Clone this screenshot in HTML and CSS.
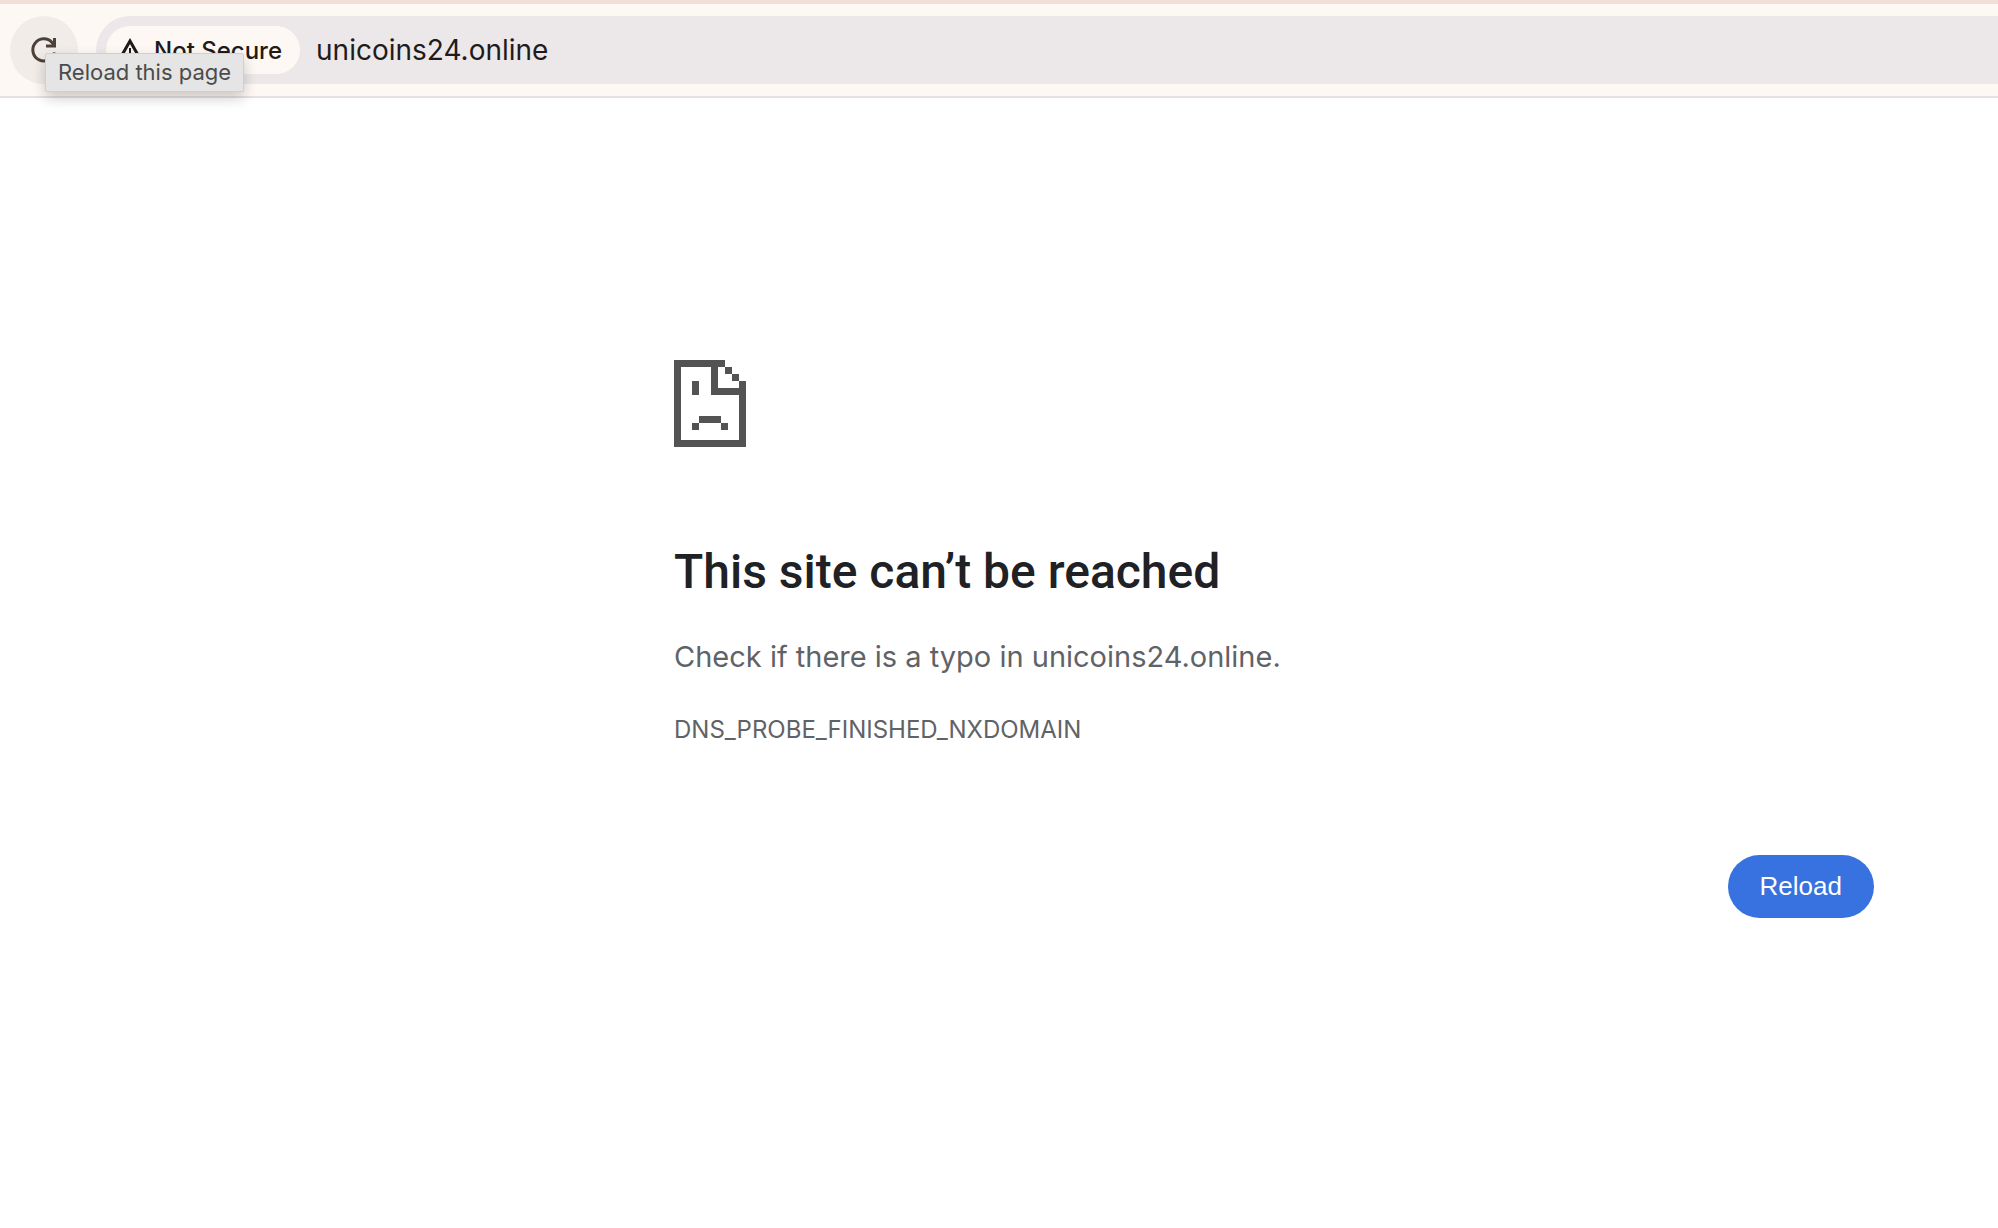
FILE: index.html
```html
<!DOCTYPE html>
<html lang="en">
<head>
  <meta charset="UTF-8">
  <meta name="viewport" content="width=device-width, initial-scale=1.0">
  <title>unicoins24.online</title>
  <link rel="stylesheet" href="styles.css">
</head>
<body>
  <header class="toolbar">
    <div class="reload-wrap">
      <button class="reload-icon" type="button" aria-label="Reload" aria-describedby="tip">
        <svg width="28" height="28" viewBox="0 0 28 28" fill="none" stroke="currentColor" stroke-width="3">
          <path d="M24.5 16.5A11 11 0 1 1 22 6.500L24.500 9.500"/>
          <path d="M24.500 2v8H16"/>
        </svg>
      </button>
      <div class="tooltip" id="tip" role="tooltip">Reload this page</div>
    </div>
    <div class="omnibox">
      <button class="chip" type="button">
        <svg width="24" height="24" viewBox="0 0 24 24" fill="none" stroke="currentColor" stroke-width="3">
          <path d="M12 3L22.500 21.500H1.500Z"/>
          <path d="M12 10v5M12 17v2.500" stroke-width="2"/>
        </svg>
        Not Secure
      </button>
      <input class="url" type="text" value="unicoins24.online" aria-label="Address">
    </div>
  </header>

  <main class="error">
    <!-- Sad page -->
    <svg class="sad-page" width="72" height="87" viewBox="0 0 72 87" fill="currentColor" shape-rendering="crispEdges" aria-hidden="true">
      <path d="M0 0h51v7H44v21h21V21h7v66H0zM7 7v73h58V35H37V7z" fill-rule="evenodd"/>
      <path d="M51 7h7v7h-7zM58 14h7v7h-7z"/>
      <path d="M18 21h7v14h-7z"/>
      <path d="M25 56h22v7H25zM18 63h7v7h-7zM47 63h7v7h-7z"/>
    </svg>
    <h1>This site can’t be reached</h1>
    <p class="summary">Check if there is a typo in unicoins24.online.</p>
    <p class="code">DNS_PROBE_FINISHED_NXDOMAIN</p>
    <div class="actions">
      <button class="reload-button" type="button">Reload</button>
    </div>
  </main>
</body>
</html>
```
FILE: styles.css
```css
:root {
  --toolbar: #fef8f4;
  --field: #ece8e9;
  --text: #202124;
  --muted: #5f6368;
  --primary: #3871e0;
}
* {
  box-sizing: border-box;
}
body {
  margin: 0;
  background: #fff;
  color: var(--text);
  font-family: Inter, "Liberation Sans", sans-serif;
}
button {
  border: none;
  cursor: pointer;
  font-family: inherit;
}

/* Toolbar */
.toolbar {
  display: flex;
  gap: 18px;
  padding: 12px 0 12px 10px;
  background: var(--toolbar);
  border-top: 4px solid #f1dfd7;
  border-bottom: 2px solid #e6e0df;
}
.reload-wrap {
  position: relative;
}
.reload-icon {
  display: flex;
  align-items: center;
  justify-content: center;
  width: 68px;
  height: 68px;
  padding: 0;
  border-radius: 50%;
  background: #f1ece8;
  color: #4d4039;
}
.tooltip {
  position: absolute;
  top: 37px;
  left: 35px;
  z-index: 1;
  padding: 0 12px;
  border: 1px solid #d2d0cf;
  border-radius: 2px;
  background: #e5e5e5;
  box-shadow: 0 6px 14px rgba(0, 0, 0, 0.2);
  color: #4b4b4b;
  font-size: 22px;
  line-height: 37px;
  white-space: nowrap;
}
.omnibox {
  flex: 1;
  display: flex;
  align-items: center;
  gap: 16px;
  padding-left: 10px;
  background: var(--field);
  border-radius: 34px 0 0 34px;
}
.chip {
  display: flex;
  align-items: center;
  gap: 12px;
  height: 48px;
  padding: 0 18px 0 12px;
  border-radius: 24px;
  background: var(--toolbar);
  color: #1f1b19;
  font-size: 24px;
  font-weight: 500;
  white-space: nowrap;
}
.url {
  flex: 1;
  min-width: 0;
  padding: 0;
  border: none;
  outline: none;
  background: none;
  color: #1f1b1b;
  font-family: inherit;
  font-size: 28px;
}

/* Error page */
.error {
  max-width: 1324px;
  margin-left: auto;
  padding: 262px 124px 0 0;
}
.sad-page {
  display: block;
  color: #535353;
}
h1 {
  margin: 95px 0 0;
  font-family: Roboto, "Liberation Sans", sans-serif;
  font-size: 48px;
  font-weight: 500;
  line-height: 60px;
}
.summary {
  margin: 32px 0 0;
  color: var(--muted);
  font-size: 29px;
  line-height: 46px;
}
.code {
  margin: 32px 0 0;
  color: var(--muted);
  font-size: 24px;
  line-height: 36px;
}
.actions {
  display: flex;
  justify-content: flex-end;
  margin-top: 107px;
}
.reload-button {
  padding: 0 32px;
  border-radius: 32px;
  background: var(--primary);
  color: #fff;
  font-family: "Liberation Sans", Arial, sans-serif;
  font-size: 26px;
  line-height: 63px;
}
```
